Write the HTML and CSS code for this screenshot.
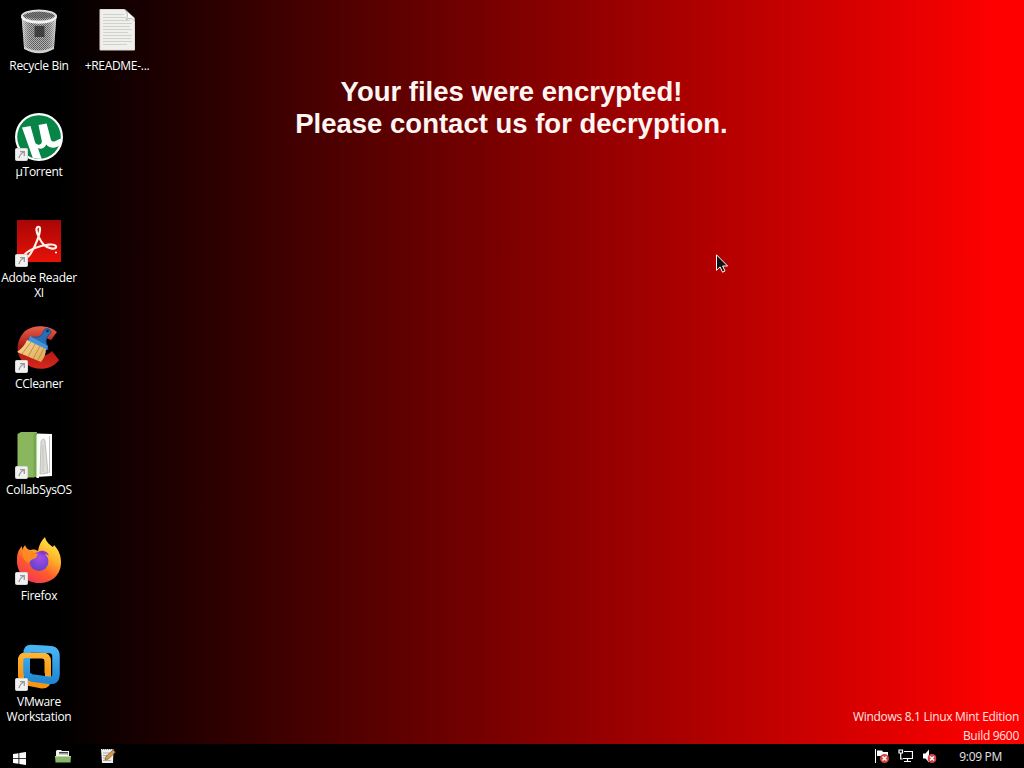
FILE: index.html
```html
<!DOCTYPE html>
<html lang="en">
<head>
    <meta charset="UTF-8">
    <meta name="viewport" content="width=device-width, initial-scale=1.0">
    <title>Desktop</title>
    <link rel="stylesheet" href="styles.css">
</head>
<body>
    <!-- shared icon parts -->
    <svg class="defs" width="0" height="0">
        <defs>
            <pattern id="mesh" width="2" height="2" patternUnits="userSpaceOnUse">
                <rect width="2" height="2" fill="#b4b4b4"/>
                <rect width="1" height="1" fill="#505050"/>
                <rect x="1" y="1" width="1" height="1" fill="#606060"/>
            </pattern>
            <linearGradient id="metal" x1="0" x2="1" y1="0" y2="0">
                <stop offset="0" stop-color="#fff" stop-opacity=".65"/>
                <stop offset=".3" stop-color="#999" stop-opacity=".1"/>
                <stop offset=".7" stop-color="#999" stop-opacity=".1"/>
                <stop offset="1" stop-color="#fff" stop-opacity=".7"/>
            </linearGradient>
            <linearGradient id="adobe" x1="0" x2="0" y1="0" y2="1">
                <stop offset="0" stop-color="#a80606"/>
                <stop offset="1" stop-color="#e81208"/>
            </linearGradient>
            <linearGradient id="cc" x1="0" x2="0" y1="0" y2="1">
                <stop offset="0" stop-color="#e8604a"/>
                <stop offset=".5" stop-color="#a81812"/>
                <stop offset="1" stop-color="#d8281c"/>
            </linearGradient>
            <linearGradient id="brush" x1="0" x2="1" y1="0" y2="1">
                <stop offset="0" stop-color="#f8dc9c"/>
                <stop offset="1" stop-color="#dda655"/>
            </linearGradient>
            <linearGradient id="fox" x1=".8" x2=".2" y1="0" y2="1">
                <stop offset="0" stop-color="#fff04a"/>
                <stop offset=".35" stop-color="#ffb02a"/>
                <stop offset=".65" stop-color="#ff5a2c"/>
                <stop offset="1" stop-color="#f0305c"/>
            </linearGradient>
            <radialGradient id="globe" cx=".55" cy=".3" r=".8">
                <stop offset="0" stop-color="#a44ee8"/>
                <stop offset="1" stop-color="#5b3fc4"/>
            </radialGradient>
            <linearGradient id="vmblue" x1="0" x2="0" y1="0" y2="1">
                <stop offset="0" stop-color="#48b4f4"/>
                <stop offset="1" stop-color="#2088d4"/>
            </linearGradient>
            <linearGradient id="vmorange" x1="0" x2="0" y1="0" y2="1">
                <stop offset="0" stop-color="#ffb432"/>
                <stop offset="1" stop-color="#f79410"/>
            </linearGradient>
            <symbol id="shortcut" viewBox="0 0 13 13">
                <rect x=".5" y=".5" width="12" height="12" rx="1" fill="#f0f0f0" stroke="#d8d8d8"/>
                <path d="M5 3.700h4.300V8M9 4C6 5.500 4.500 7.500 4 10" fill="none" stroke="#999" stroke-width="1.300"/>
            </symbol>
            <symbol id="error" viewBox="0 0 9 9">
                <circle cx="4.500" cy="4.500" r="4.500" fill="#d84444"/>
                <path d="M2.500 2.500l4 4m0-4l-4 4" stroke="#fff" stroke-width="1.500"/>
            </symbol>
        </defs>
    </svg>

    <div class="desktop">
        <div class="icons">
            <div class="icon">
                <svg viewBox="0 0 48 48">
                    <path d="M6.500 8h35L39 41Q24 50 9 41z" fill="url(#mesh)"/>
                    <path d="M6.500 8h35L39 41Q24 50 9 41z" fill="url(#metal)"/>
                    <path d="M19.500 19h10v11h-10z" fill="#222" opacity=".7"/>
                    <path d="M9 39.500Q24 47.500 39 39.500v2.500Q24 50.500 9 42z" fill="#d0d0d0"/>
                    <ellipse cx="24" cy="9" rx="17" ry="5.500" fill="url(#mesh)"/>
                    <path d="M8 9Q24 0 40 9Q24 14 8 9z" fill="#555" opacity=".6"/>
                    <ellipse cx="24" cy="9" rx="17" ry="5.500" fill="none" stroke="#dedede" stroke-width="2"/>
                    <path d="M7 10Q10 15.500 24 15.500T41 10" fill="none" stroke="#f4f4f4" stroke-width="2.500"/>
                </svg>
                <span class="label">Recycle Bin</span>
            </div>
            <div class="icon">
                <svg viewBox="0 0 48 48">
                    <circle cx="24" cy="24" r="24" fill="#fff"/>
                    <circle cx="24" cy="24" r="21.800" fill="#078547"/>
                    <path d="M7 14.500l8.500-1.500 4.500 16c1.200 4 7.500 3.500 6.800-1L23.500 12l8.100-1.500 4.300 16c.8 2.500 3 2.700 6.500.5l5-2-1 6c-4.500 4.500-12 5-15 .5-2 4-6 5-8.500 3.500l3.800 11-8.900-1z" fill="#fff"/>
                </svg>
                <svg class="arrow"><use href="#shortcut"/></svg>
                <span class="label">µTorrent</span>
            </div>
            <div class="icon">
                <svg viewBox="0 0 48 48">
                    <path d="M2 1h44v42H2z" fill="url(#adobe)"/>
                    <path d="M8 38c2-4 7-7 12-9 9-3.500 20-5 21-1.500s-8 2.500-12-1.500C25 22 21 13 21.500 10c.5-3 3.500-3 3.500 0 0 5-4 16-9 24-2.500 4-6 7-8 4z" fill="none" stroke="#fff0e8" stroke-width="2.200"/>
                    <path d="M41 32.500v2m-1-1h2" stroke="#fff" stroke-width="1"/>
                </svg>
                <svg class="arrow"><use href="#shortcut"/></svg>
                <span class="label">Adobe Reader XI</span>
            </div>
            <div class="icon">
                <svg viewBox="0 0 48 48">
                    <path d="M42 7C34 0 19-1 10 6c-10 10-10 26 1 33 9 7 25 7 33-4l-7-9c-5 5-11 6-15 2-5-4-5-10 1-14 4-2 9-1 13 1z" fill="url(#cc)"/>
                    <path d="M28 7c1-5 8-4 8 0 0 2-3 3-4 5l-1 4 2 9-20-11 5-2c5 1 9-1 10-5z" fill="#276eb8" stroke="#174a88" stroke-width=".8"/>
                    <circle cx="32.500" cy="6" r="1.300" fill="#082848"/>
                    <path d="M15 11l18 10-1 4-19-9z" fill="#3f94dd"/>
                    <path d="M12 15l19 9c0 5-2 9-5 13L2 27c5-4 8-7 10-12z" fill="url(#brush)"/>
                    <path d="M16 17L7 29m13-10l-7 13m12-11l-7 13m11-11l-6 12" stroke="#bd8037" stroke-width=".8"/>
                </svg>
                <svg class="arrow"><use href="#shortcut"/></svg>
                <span class="label">CCleaner</span>
            </div>
            <div class="icon">
                <svg viewBox="0 0 48 48">
                    <path d="M21 2.500l16 .5v42l-16 1z" fill="#fff"/>
                    <path d="M26 10q3-4 4 0l3 32-8 1z" fill="#dcdcd8" stroke="#aaa" stroke-width=".7"/>
                    <path d="M28 14v27M34.500 5v37" stroke="#c4c4c0"/>
                    <path d="M2.500 3L6 1h16v44l-3.500 1.500h-16z" fill="#8ab65e"/>
                    <path d="M18.500 3L22 1v44l-3.500 1.500z" fill="#78a54f"/>
                    <path d="M21.500 4H24v43h-2.500z" fill="#f4fff0"/>
                </svg>
                <svg class="arrow"><use href="#shortcut"/></svg>
                <span class="label">CollabSysOS</span>
            </div>
            <div class="icon">
                <svg viewBox="0 0 48 48">
                    <path d="M2 21C2 16 4 12 7 9v4l3-5c1 3 3 5 6 5 3-1 5 0 7 1 1-6 3-10 7-14 1 5 5 8 8 10l1-2c5 5 7 11 7 17 0 13-9 21-22 21S1 36 2 21z" fill="url(#fox)"/>
                    <circle cx="24" cy="24.500" r="9.500" fill="url(#globe)"/>
                    <path d="M8 10c2 3 5 4 9 4 2 1 4 3 6 3l-2 4c-3 1-6 2-7 5-4-1-8-6-6-16z" fill="#ff8a24"/>
                    <path d="M23 15c5-3 10 0 11 4-2-2-4-2-6-1z" fill="#8c35c8"/>
                </svg>
                <svg class="arrow"><use href="#shortcut"/></svg>
                <span class="label">Firefox</span>
            </div>
            <div class="icon">
                <svg viewBox="0 0 48 48">
                    <path d="M10 12.500h17q6 0 6 6v18q0 6-6 6l-15-3q-6-1-6-7v-14q0-6 4-6z" fill="none" stroke="url(#vmorange)" stroke-width="6"/>
                    <path d="M16 5.500l18 1q7 0 7 7v18q0 6-6 6l-18-2.500q-5-1-5-6V11q0-5.500 4-5.500z" fill="none" stroke="url(#vmblue)" stroke-width="7.500"/>
                    <path d="M5.500 34V17.500q0-5 5-5h15.500q6 0 6 6V30" fill="none" stroke="url(#vmorange)" stroke-width="5"/>
                    <path d="M15 16h13.500v16L15 30z" fill="#000"/>
                </svg>
                <svg class="arrow"><use href="#shortcut"/></svg>
                <span class="label">VMware Workstation</span>
            </div>
            <div class="icon">
                <svg viewBox="0 0 48 48">
                    <path d="M7 2.500h24.500L41.500 12v31H7z" fill="#efefec" stroke="#dcdcd8"/>
                    <path d="M10 7.500h21m-21 3h23m-23 3h27m-27 3h29m-29 3h27m-27 3h29m-29 3h25m-25 3h29m-29 3h28m-28 3h29m-29 3h24" stroke="#d0d0ce"/>
                    <path d="M32 2.500q4 4 1.500 10Q38 9.500 41.500 14V11z" fill="#fff" stroke="#999" stroke-width=".7"/>
                </svg>
                <span class="label nowrap">+README-...</span>
            </div>
        </div>

        <h1 class="message">Your files were encrypted!<br>Please contact us for decryption.</h1>

        <div class="watermark">
            <div class="edition">Windows 8.1 Linux Mint Edition</div>
            <div class="build">Build 9600</div>
        </div>

        <svg class="cursor" viewBox="0 0 12 19">
            <path d="M.5.800v15.500l3.600-3.400 2.400 5.300 2.500-1.200-2.400-5h5z" fill="#111" stroke="#fff"/>
        </svg>
    </div>

    <div class="taskbar">
        <div class="launchers">
            <svg class="start" width="13" height="13" viewBox="0 0 13 13">
                <path d="M0 2l5.500-.8V6H0zM6.300 1L13 0v6H6.300zM0 6.800h5.500v4.900L0 11zM6.300 6.800H13V13l-6.700-1z" fill="#fff"/>
            </svg>
            <svg width="16" height="14" viewBox="0 0 16 14">
                <path d="M1 8V2l1-1h4l1 1h7v6z" fill="#f2f2ee"/>
                <path d="M4 3.500h9M4 5h9" stroke="#444"/>
                <path d="M4 5.500h8V7H4z" fill="#fff"/>
                <path d="M0 7h16l-.5 6.500H.5z" fill="#8cb76a"/>
                <path d="M0 7.500h16" stroke="#b9d7a0"/>
            </svg>
            <svg width="16" height="16" viewBox="0 0 16 16">
                <path d="M1 1h12.500L13 15H2z" fill="#eeeeea"/>
                <path d="M2 1.500h11" stroke="#888" stroke-dasharray="1 1"/>
                <path d="M3 5h7M3 7.500h6M3 10h4M3 12.500h8" stroke="#aaa"/>
                <path d="M5 12l1-3.500L13 2l2.500 2-7 7z" fill="#d39a4f" stroke="#70451e" stroke-width=".6"/>
            </svg>
        </div>
        <div class="tray">
            <svg width="14" height="14" viewBox="0 0 14 14">
                <path d="M.5 0v14" stroke="#fff"/>
                <path d="M2 1.500h5l1 1.500h5v5H8L7 7H2z" fill="#fff"/>
                <use href="#error" x="5" y="5" width="9" height="9"/>
            </svg>
            <svg width="15" height="14" viewBox="0 0 15 14">
                <path d="M6 2.500h8.500v7H5M9.500 10v2.500M6 12.500h7" fill="none" stroke="#fff" stroke-width="1.200"/>
                <path d="M1 1h3.500v3H1zM2.700 4v6h2" fill="none" stroke="#fff" stroke-width="1.200"/>
            </svg>
            <svg width="15" height="14" viewBox="0 0 15 14">
                <path d="M1 4.500h2.500L7 .500v13L3.500 9.500H1z" fill="#fff"/>
                <use href="#error" x="5.500" y="5" width="9" height="9"/>
            </svg>
            <span class="clock">9:09 PM</span>
        </div>
    </div>
</body>
</html>
```
FILE: styles.css
```css
body {
    margin: 0;
    width: 1024px;
    height: 768px;
    overflow: hidden;
    display: flex;
    flex-direction: column;
    background: linear-gradient(to right, #000 55px, #7e0000 512px, #c60000 790px, #f00 1000px);
    font-family: "Open Sans", "Noto Sans", sans-serif;
    font-size: 12px;
    letter-spacing: -0.3px;
    line-height: 15px;
    color: #fff;
}
.defs {
    position: absolute;
}
.desktop {
    position: relative;
    flex: 1;
}
.icons {
    display: grid;
    grid-auto-flow: column;
    grid-template-rows: repeat(7, 106px);
    grid-auto-columns: 78px;
    width: 156px;
    height: 742px;
}
.icon {
    position: relative;
    display: flex;
    flex-direction: column;
    align-items: center;
    padding-top: 7px;
}
.icon svg {
    width: 48px;
    height: 48px;
}
.icon .arrow {
    position: absolute;
    left: 15px;
    top: 42px;
    width: 13px;
    height: 13px;
}
.label {
    margin-top: 3px;
    text-align: center;
    text-shadow: 0 1px 2px #000;
}
.nowrap {
    white-space: nowrap;
}
.message {
    position: absolute;
    left: 0;
    top: 76px;
    width: 1023px;
    margin: 0;
    text-align: center;
    font: bold 27.5px/32px "Liberation Sans", Arial, sans-serif;
    letter-spacing: 0;
    color: #fff6f4;
}
.watermark {
    position: absolute;
    right: 5px;
    bottom: -1px;
    text-align: right;
    line-height: 19px;
    color: #ffe4e0;
}
.cursor {
    position: absolute;
    left: 716px;
    top: 254px;
    width: 12px;
    height: 19px;
}
.taskbar {
    height: 24px;
    background: #000;
    display: flex;
    justify-content: space-between;
    align-items: center;
}
.launchers {
    display: flex;
    align-items: center;
    padding-left: 13px;
    gap: 29px;
}
.start {
    margin-top: 4px;
}
.tray {
    display: flex;
    align-items: center;
    gap: 9px;
    padding-right: 22px;
}
.clock {
    margin-left: 13px;
    color: #e4e4e4;
}
```
